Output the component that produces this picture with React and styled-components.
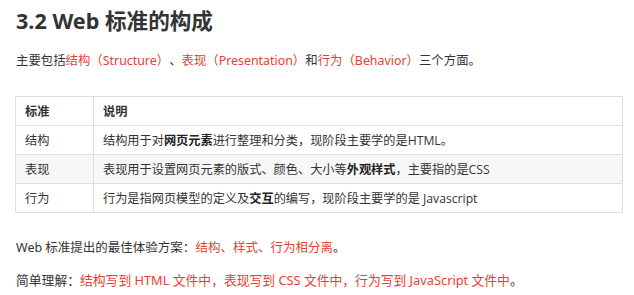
import React from "react";
import styled, { createGlobalStyle } from "styled-components";

const GlobalStyle = createGlobalStyle`
  html, body {
    margin: 0;
    padding: 0;
    background: #fff;
  }
  body {
    font-family: "Noto Sans", "Noto Sans CJK SC", sans-serif;
    color: #333;
    text-spacing-trim: space-all;
  }
`;

const rows = [
  {
    name: "结构",
    desc: [
      "结构用于对",
      { b: "网页元素" },
      "进行整理和分类，现阶段主要学的是HTML。",
    ],
  },
  {
    name: "表现",
    desc: [
      "表现用于设置网页元素的版式、颜色、大小等",
      { b: "外观样式" },
      "，主要指的是CSS",
    ],
    shaded: true,
  },
  {
    name: "行为",
    desc: [
      "行为是指网页模型的定义及",
      { b: "交互" },
      "的编写，现阶段主要学的是 Javascript",
    ],
  },
];

const App = () => {
  return (
    <Page>
      <GlobalStyle />
      <Title>3.2 Web 标准的构成</Title>

      <Intro>
        主要包括<Red>结构（Structure）</Red>、<Red>表现（Presentation）</Red>和
        <Red>行为（Behavior）</Red>三个方面。
      </Intro>

      <Table>
        <thead>
          <tr>
            <Th $first>标准</Th>
            <Th>说明</Th>
          </tr>
        </thead>
        <tbody>
          {rows.map((row) => (
            <Row key={row.name} $shaded={row.shaded}>
              <Td $first>{row.name}</Td>
              <Td>
                {row.desc.map((part, i) =>
                  typeof part === "string" ? (
                    <React.Fragment key={i}>{part}</React.Fragment>
                  ) : (
                    <strong key={i}>{part.b}</strong>
                  )
                )}
              </Td>
            </Row>
          ))}
        </tbody>
      </Table>

      <Line $top={24} $size={12.5}>
        Web 标准提出的最佳体验方案：<Red>结构、样式、行为相分离</Red>。
      </Line>
      <Line $top={10} $size={12.8}>
        简单理解：<Red>结构写到 HTML 文件中，表现写到 CSS 文件中，行为写到 JavaScript 文件中</Red>。
      </Line>
    </Page>
  );
};

const Page = styled.div`
  padding: 6px 0 0 16px;
  width: 634px;
  height: 295px;
  box-sizing: border-box;
  overflow: hidden;
`;

const Title = styled.h2`
  margin: 0;
  font-size: 21.6px;
  line-height: 30px;
  font-weight: 700;
  color: #333;
`;

const Intro = styled.p`
  margin: 14px 0 0;
  font-size: 12.4px;
  line-height: 22px;
  color: #333;
`;

const Red = styled.span`
  color: #e8412f;
`;

const Table = styled.table`
  margin: 24px 0 0 -1px;
  width: 608px;
  border-collapse: collapse;
  font-family: "Open Sans", "Noto Sans CJK SC", sans-serif;
  font-size: 12.2px;
  color: #333;

  strong {
    font-weight: 700;
    color: #222;
  }
`;

const Row = styled.tr`
  background: ${({ $shaded }) => ($shaded ? "#f7f7f7" : "#fff")};
`;

const Th = styled.th`
  height: 28px;
  padding: 0 9px;
  border: 1px solid #dedede;
  text-align: left;
  font-weight: 700;
  width: ${({ $first }) => ($first ? "59px" : "auto")};
`;

const Td = styled.td`
  height: 28px;
  padding: 0 9px;
  border: 1px solid #dedede;
  text-align: left;
  width: ${({ $first }) => ($first ? "59px" : "auto")};
`;

const Line = styled.p`
  margin: ${({ $top }) => $top}px 0 0;
  font-size: ${({ $size }) => $size}px;
  line-height: 22px;
  color: #333;
`;

export default App;
